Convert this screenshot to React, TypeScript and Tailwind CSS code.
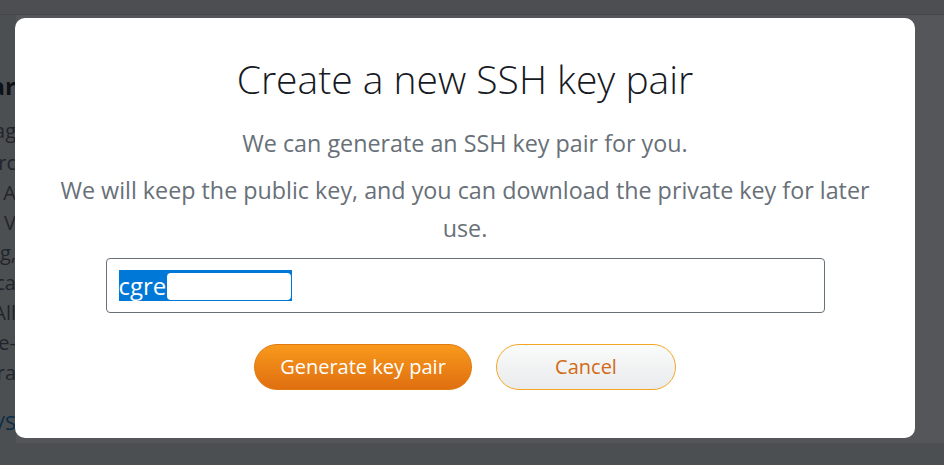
import React from "react";

const sideLines = [
  { text: "Manag", cls: "mt-[15px]" },
  { text: "sourc", cls: "mt-[2px]" },
  { text: "Lightsail. A", cls: "" },
  { text: "instances. V", cls: "" },
  { text: "warning,", cls: "" },
  { text: "applica", cls: "" },
  { text: "All", cls: "" },
  { text: "one-", cls: "" },
  { text: "genera", cls: "" },
];

function BackgroundPage() {
  return (
    <div className="flex flex-col h-[465px] bg-[#e4e6e8]">
      <div className="h-[15px] bg-[#e3e5e6] border-b border-[#c8cacc]" />
      <div className="flex h-[428px]">
        <div className="w-[16px] overflow-hidden flex flex-col items-end whitespace-nowrap text-[20px] leading-[30px] text-[#545b64]">
          <div className="mt-[56px] text-[24px] leading-[30px] font-bold text-[#16191f]">Clear</div>
          {sideLines.map((l, i) => (
            <div key={i} className={l.cls}>
              {l.text}
            </div>
          ))}
          <div className="mt-[20px] text-[#0073bb]">aws/S</div>
        </div>
        <div className="flex-1 bg-white" />
      </div>
    </div>
  );
}

export default function App() {
  return (
    <div
      className="relative w-[944px] h-[465px] overflow-hidden"
      style={{ fontFamily: '"Open Sans", "Noto Sans", sans-serif' }}
    >
      <BackgroundPage />

      {/* Overlay */}
      <div className="absolute inset-0 bg-[#0b0e13]/70 pt-[18px] pl-[15px]">
        <div className="w-[900px] h-[420px] bg-white rounded-[10px] pt-[38px] flex flex-col items-center">
          <h2 className="text-[39px] leading-[46px] font-light text-[#16191f]">
            Create a new SSH key pair
          </h2>

          <div className="px-[35px] text-center text-[23.3px] leading-[38px] text-[#687078]">
            <p className="mt-[22px]">We can generate an SSH key pair for you.</p>
            <p className="mt-[9px]">
              We will keep the public key, and you can download the private key for later use.
            </p>
          </div>

          <div className="mt-[11px] w-[719px] h-[55px] border border-[#687078] rounded-[4px] flex items-center px-[12px]">
            <span className="flex items-center h-[31px] bg-[#0078d7] pr-[1px]">
              <span className="text-[24px] leading-[31px] text-white">cgre</span>
              <span className="inline-block w-[124px] h-[27px] bg-white rounded-[4px] ml-[1px] mt-[1px]" />
            </span>
          </div>

          <div className="mt-[31px] flex gap-[24px]">
            <button className="w-[218px] h-[46px] rounded-full border border-[#e07a10] bg-gradient-to-b from-[#f8991c] to-[#e06f10] text-white text-[20px]">
              Generate key pair
            </button>
            <button className="w-[180px] h-[46px] rounded-full border border-[#f4a524] bg-gradient-to-b from-[#fafbfb] to-[#e9ebec] text-[#d26a15] text-[20px]">
              Cancel
            </button>
          </div>
        </div>
      </div>
    </div>
  );
}
